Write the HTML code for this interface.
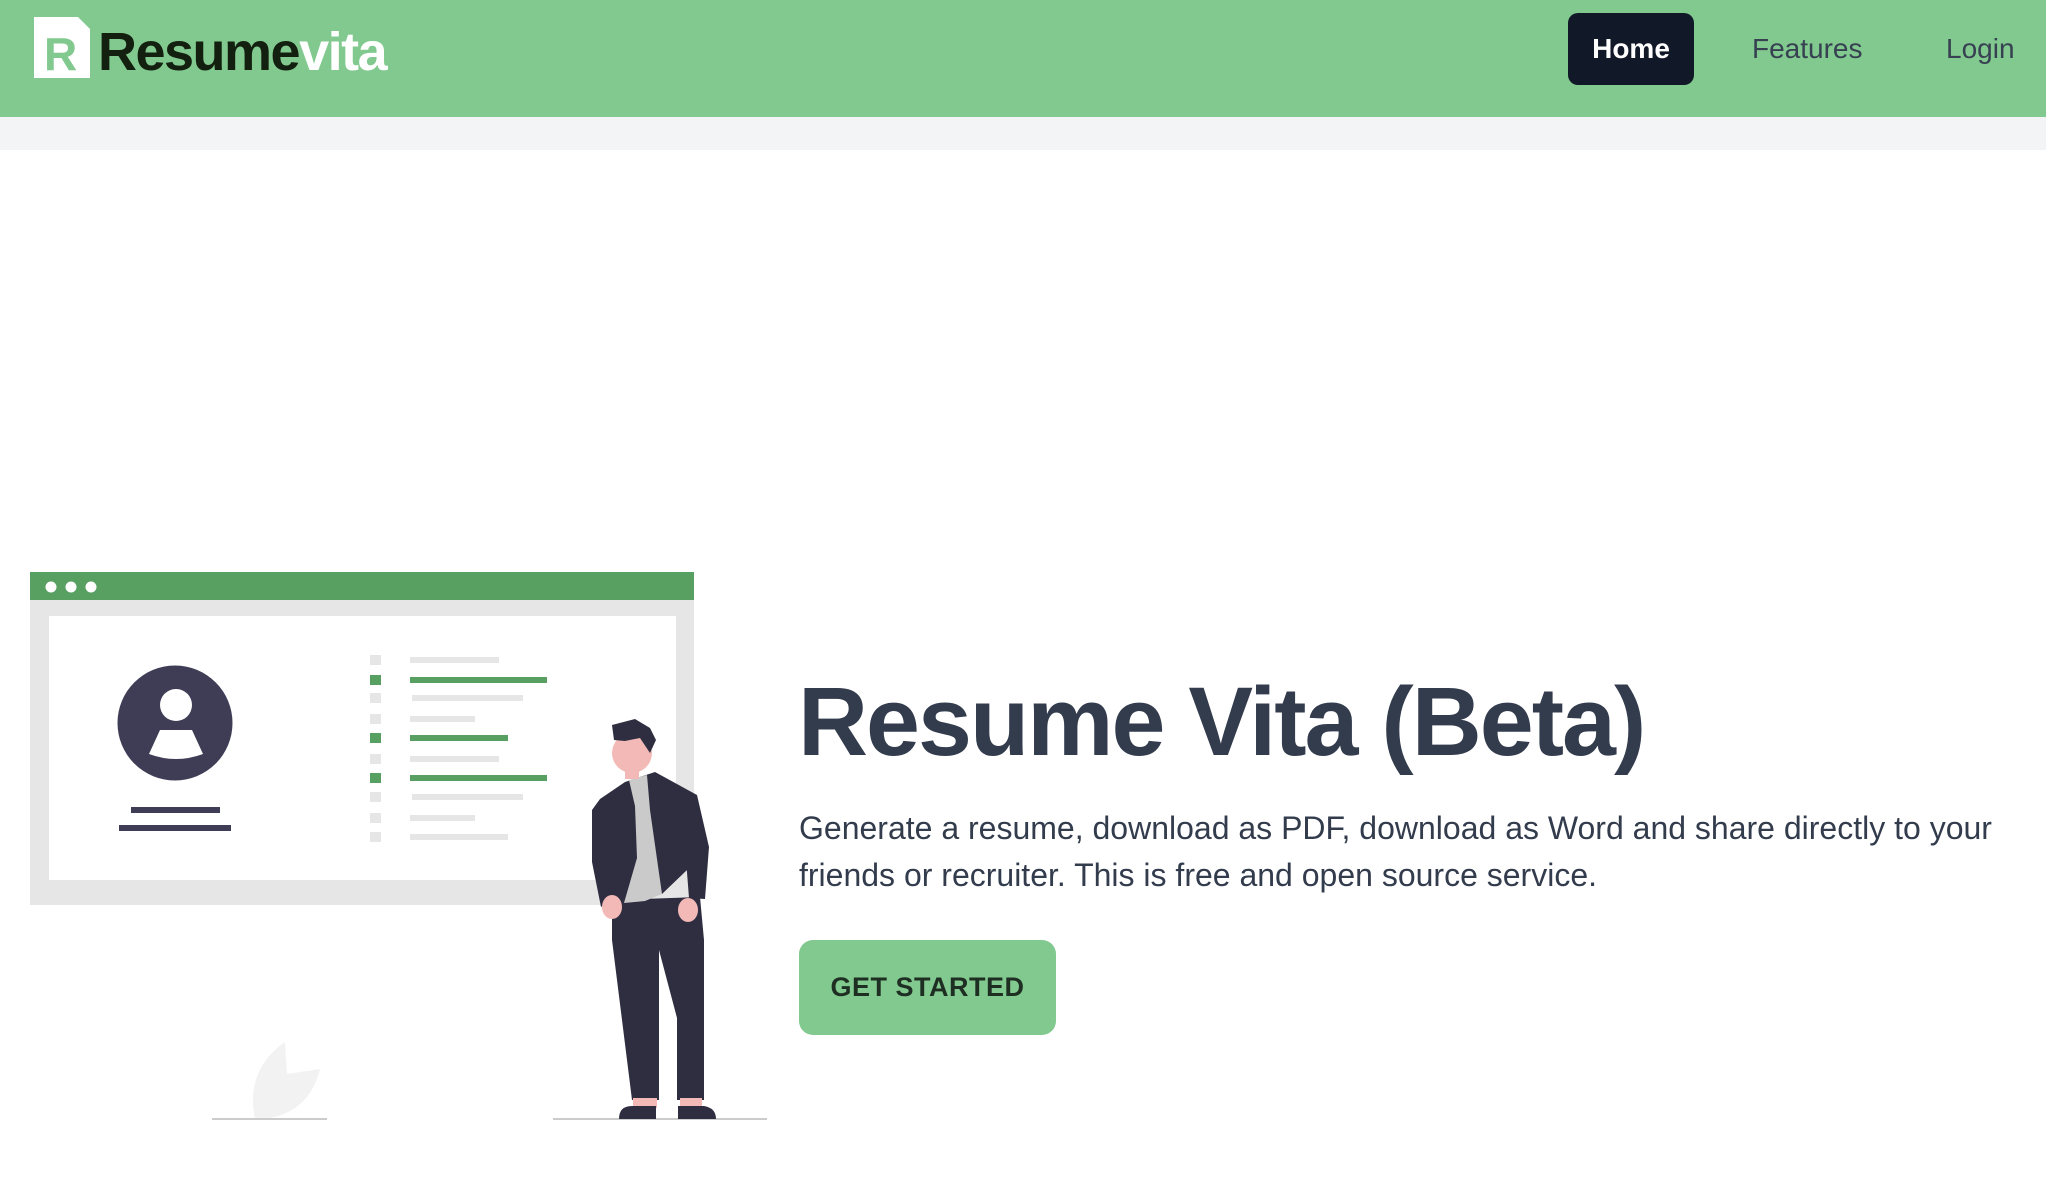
<!DOCTYPE html>
<html><head><meta charset="utf-8"><style>
*{margin:0;padding:0;box-sizing:border-box}
body{width:2046px;height:1190px;background:#fff;font-family:"Liberation Sans",sans-serif;position:relative;overflow:hidden}
.hdr{position:absolute;left:0;top:0;width:2046px;height:117px;background:#81c98f}
.band{position:absolute;left:0;top:117px;width:2046px;height:33px;background:#f3f4f6}
.logo{position:absolute;left:98px;top:19px;font-size:54px;font-weight:bold;letter-spacing:-1.5px;color:#13200f;line-height:66px}
.logo span{color:#fff}
.nav{position:absolute;top:13px;height:72px;line-height:72px;font-size:28px;color:#374151}
.home{left:1568px;width:126px;background:#111827;color:#fff;border-radius:10px;text-align:center;font-weight:bold}
h1{position:absolute;left:798px;top:666px;font-size:97px;font-weight:bold;color:#333c4d;letter-spacing:-2px;white-space:nowrap}
p{position:absolute;left:799px;top:805px;width:1240px;font-size:32px;line-height:47px;color:#333c4d}
.btn{position:absolute;left:799px;top:940px;width:257px;height:95px;background:#81c98f;border-radius:14px;text-align:center;line-height:95px;font-size:27px;font-weight:bold;color:#1f2e22;letter-spacing:0.5px}
</style></head><body>
<div class="hdr"></div>
<div class="band"></div>
<svg style="position:absolute;left:0;top:0" width="100" height="100">
<polygon points="34,17 78,17 90,29 90,78 34,78" fill="#fff"/>
<text x="44" y="70" font-family="Liberation Sans" font-weight="bold" font-size="46" fill="#81c98f">R</text>
</svg>
<div class="logo">Resume<span>vita</span></div>
<div class="nav home">Home</div>
<div class="nav" style="left:1752px">Features</div>
<div class="nav" style="left:1946px">Login</div>

<svg style="position:absolute;left:0;top:0" width="800" height="1190">
<rect x="30" y="572" width="664" height="28" fill="#58a062"/>
<circle cx="51" cy="587" r="5.5" fill="#fff"/><circle cx="71" cy="587" r="5.5" fill="#fff"/><circle cx="91" cy="587" r="5.5" fill="#fff"/>
<rect x="30" y="600" width="664" height="305" fill="#e6e6e6"/>
<rect x="49" y="616" width="627" height="264" fill="#fff"/>
<circle cx="175" cy="723" r="57.5" fill="#3f3d56"/>
<ellipse cx="176" cy="705" rx="16" ry="16" fill="#fff"/>
<path d="M160 730 L192 730 L203 754 Q176 764 149 754 Z" fill="#fff"/>
<rect x="131" y="807" width="89" height="6" fill="#3f3d56"/>
<rect x="119" y="825" width="112" height="6" fill="#3f3d56"/>
<g fill="#e6e6e6">
<rect x="370" y="655" width="11" height="10"/><rect x="410" y="657" width="89" height="6"/>
<rect x="370" y="693" width="11" height="10"/><rect x="412" y="695" width="111" height="6"/>
<rect x="370" y="714" width="11" height="10"/><rect x="410" y="716" width="65" height="6"/>
<rect x="370" y="754" width="11" height="10"/><rect x="410" y="756" width="89" height="6"/>
<rect x="370" y="792" width="11" height="10"/><rect x="412" y="794" width="111" height="6"/>
<rect x="370" y="813" width="11" height="10"/><rect x="410" y="815" width="65" height="6"/>
<rect x="370" y="832" width="11" height="10"/><rect x="410" y="834" width="98" height="6"/>
</g>
<g fill="#58a062">
<rect x="370" y="675" width="11" height="10"/><rect x="410" y="677" width="137" height="6"/>
<rect x="370" y="733" width="11" height="10"/><rect x="410" y="735" width="98" height="6"/>
<rect x="370" y="773" width="11" height="10"/><rect x="410" y="775" width="137" height="6"/>
</g>
<path d="M285 1042 L287 1074 L320 1069 Q310 1110 270 1118 L255 1119 Q245 1070 285 1042 Z" fill="#f2f2f2"/>
<rect x="212" y="1118" width="115" height="2" fill="#cccccc"/>
<rect x="553" y="1118" width="214" height="2" fill="#cccccc"/>
<polygon points="612,900 700,897 704,940 704,1100 677,1100 677,1018 659,950 659,1100 632,1100 612,940" fill="#2f2e41"/>
<rect x="633" y="1098" width="24" height="10" fill="#f3b9b7"/>
<rect x="680" y="1098" width="22" height="10" fill="#f3b9b7"/>
<path d="M619 1119 Q619 1106 632 1106 L656 1106 L656 1119 Z" fill="#2f2e41"/>
<path d="M678 1119 L678 1106 L704 1106 Q716 1108 716 1119 Z" fill="#2f2e41"/>
<polygon points="625,782 655,772 697,795 709,847 705,899 689,898 684,834 687,870 662,894 625,903 615,898 601,907 592,862 592,810 600,799" fill="#2f2e41"/>
<polygon points="629,780 647,775 650,810 662,894 645,901 624,903 637,858 635,806" fill="#cacaca"/>
<ellipse cx="612" cy="907" rx="10" ry="12" fill="#f3b9b7"/>
<ellipse cx="688" cy="910" rx="10" ry="12" fill="#f3b9b7"/>
<rect x="625" y="765" width="14" height="14" fill="#f3b9b7"/>
<ellipse cx="632" cy="753" rx="20" ry="20" fill="#f3b9b7"/>
<polygon points="612,725 635,719 650,728 656,740 650,753 640,738 625,741 614,740" fill="#2f2e41"/>
</svg>

<h1>Resume Vita (Beta)</h1>
<p>Generate a resume, download as PDF, download as Word and share directly to your friends or recruiter. This is free and open source service.</p>
<div class="btn">GET STARTED</div>
</body></html>
